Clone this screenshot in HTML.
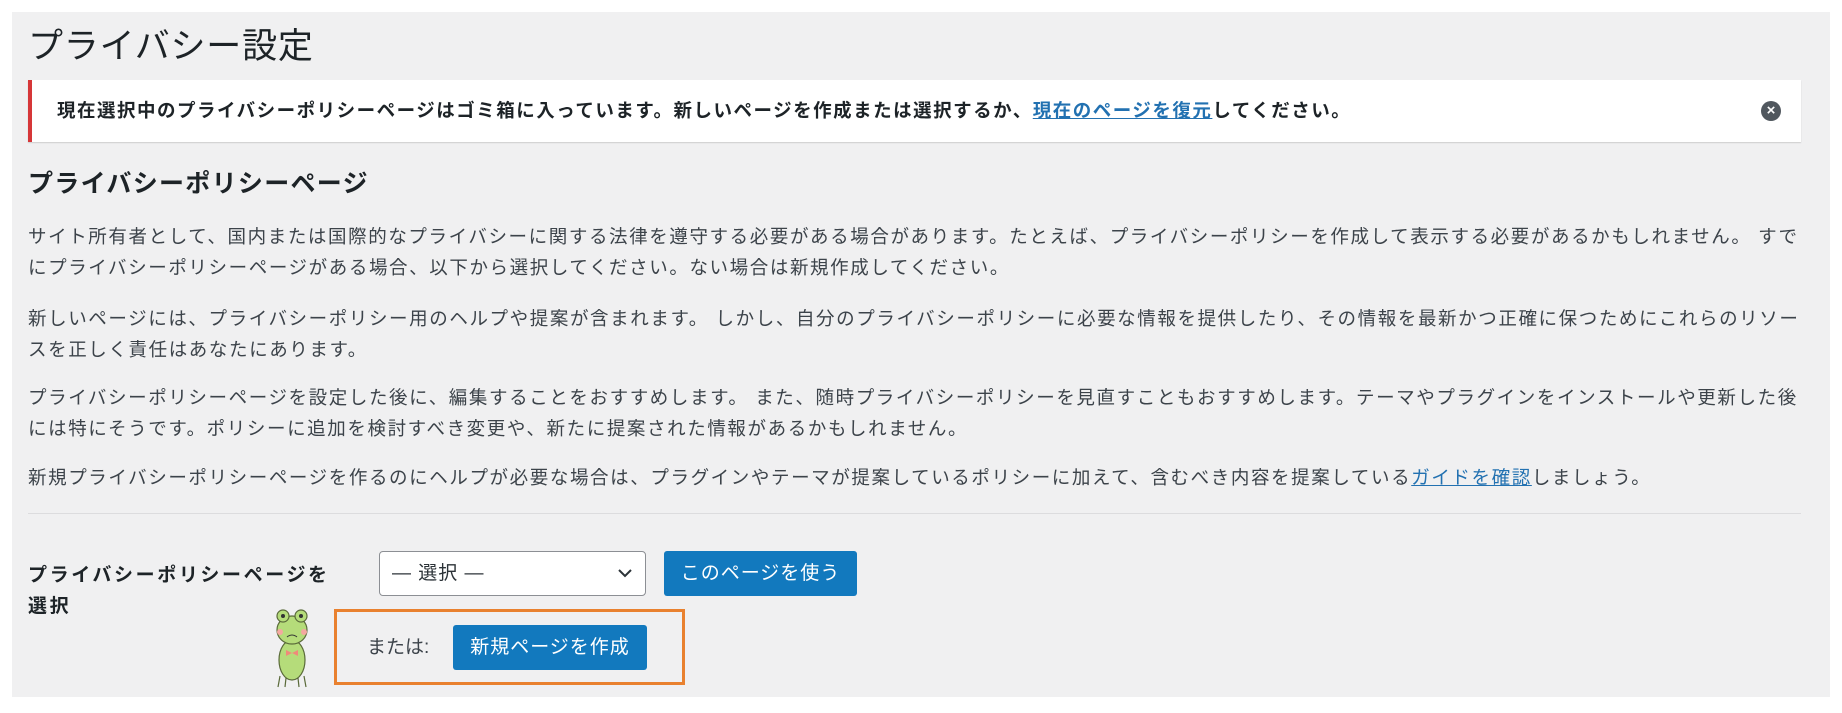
<!DOCTYPE html>
<html><head><meta charset="utf-8"><style>
body{margin:0;width:1842px;height:713px;background:#fff;overflow:hidden;font-family:"Liberation Sans","Noto Sans CJK JP",sans-serif;color:#3c434a}
.panel{position:absolute;left:12px;top:12px;width:1818px;height:685px;background:#f0f0f1}
.abs{position:absolute}
h1{position:absolute;left:28px;top:18px;margin:0;font-size:35px;font-weight:400;color:#1d2327;letter-spacing:0.8px}
.notice{position:absolute;left:28px;top:80px;width:1773px;height:62px;background:#fff;border-left:4px solid #d63638;box-shadow:0 1px 1px rgba(0,0,0,.15);font-size:18.5px;font-weight:bold;color:#1d2327;line-height:62px;box-sizing:border-box;padding-left:25px;letter-spacing:1.5px}
.notice a{color:#2271b1;text-decoration:underline}
.x{position:absolute;right:20px;top:21px;width:20px;height:20px;border-radius:50%;background:#50575e;color:#fff;font-size:15px;line-height:20px;text-align:center;font-weight:bold;letter-spacing:0}
h2{position:absolute;left:28px;top:164px;margin:0;font-size:25px;color:#1d2327;letter-spacing:1.3px}
.txt{position:absolute;left:28px;width:1780px;font-size:18.5px;line-height:31px;color:#3c434a;letter-spacing:1.6px}
.txt a{color:#2271b1;text-decoration:underline}
hr{position:absolute;left:28px;top:513px;width:1773px;margin:0;border:0;border-top:1px solid #dcdcde}
.lbl{position:absolute;left:28px;top:560px;font-size:19px;font-weight:bold;color:#1d2327;line-height:31px;letter-spacing:2.6px}
.sel{position:absolute;left:379px;top:551px;width:267px;height:45px;box-sizing:border-box;border:1px solid #8c8f94;border-radius:4px;background:#fff;font-size:19px;line-height:43px;padding-left:12px;color:#2c3338;letter-spacing:1px}
.btn{position:absolute;background:#1279be;color:#fff;border-radius:3px;font-size:19px;text-align:center;letter-spacing:1px}
.orange{position:absolute;left:334px;top:609px;width:351px;height:76px;box-sizing:border-box;border:3.5px solid #e9812f}
</style></head><body>
<div class="panel"></div>
<h1>プライバシー設定</h1>
<div class="notice">現在選択中のプライバシーポリシーページはゴミ箱に入っています。新しいページを作成または選択するか、<a>現在のページを復元</a>してください。<div class="x">×</div></div>
<h2>プライバシーポリシーページ</h2>
<div class="txt" style="top:221px">サイト所有者として、国内または国際的なプライバシーに関する法律を遵守する必要がある場合があります。たとえば、プライバシーポリシーを作成して表示する必要があるかもしれません。 すで<br>にプライバシーポリシーページがある場合、以下から選択してください。ない場合は新規作成してください。</div>
<div class="txt" style="top:303px">新しいページには、プライバシーポリシー用のヘルプや提案が含まれます。 しかし、自分のプライバシーポリシーに必要な情報を提供したり、その情報を最新かつ正確に保つためにこれらのリソー<br>スを正しく責任はあなたにあります。</div>
<div class="txt" style="top:382px">プライバシーポリシーページを設定した後に、編集することをおすすめします。 また、随時プライバシーポリシーを見直すこともおすすめします。テーマやプラグインをインストールや更新した後<br>には特にそうです。ポリシーに追加を検討すべき変更や、新たに提案された情報があるかもしれません。</div>
<div class="txt" style="top:462px">新規プライバシーポリシーページを作るのにヘルプが必要な場合は、プラグインやテーマが提案しているポリシーに加えて、含むべき内容を提案している<a>ガイドを確認</a>しましょう。</div>
<hr>
<div class="lbl">プライバシーポリシーページを<br>選択</div>
<div class="sel">— 選択 —<svg class="abs" style="right:12px;top:16px" width="16" height="10" viewBox="0 0 16 10"><path d="M2 2l6 6 6-6" fill="none" stroke="#2c3338" stroke-width="2"/></svg></div>
<div class="btn" style="left:664px;top:551px;width:193px;height:45px;line-height:45px">このページを使う</div>
<div class="orange"></div>
<div class="abs" style="left:367px;top:632px;font-size:19px;color:#3c434a">または:</div>
<div class="btn" style="left:453px;top:625px;width:194px;height:45px;line-height:45px">新規ページを作成</div>
<svg class="abs" style="left:264px;top:606px" width="56" height="82" viewBox="0 0 56 82">
<g stroke="#5a6a3a" stroke-width="1.2" fill="#b5dc7a">
<ellipse cx="28" cy="54" rx="13" ry="20"/>
<ellipse cx="28" cy="24" rx="15" ry="14"/>
<circle cx="19" cy="10" r="6"/><circle cx="37" cy="10" r="6"/>
<path d="M16 70 l-2 11 M22 72 l-1 9 M34 72 l1 9 M40 70 l2 11"/>
</g>
<circle cx="19" cy="10" r="2" fill="#333"/><circle cx="37" cy="10" r="2" fill="#333"/>
<circle cx="16" cy="26" r="3" fill="#f4a8a0"/><circle cx="40" cy="26" r="3" fill="#f4a8a0"/>
<path d="M23 31 q5 -4 10 0" stroke="#333" fill="none"/>
<path d="M22 44 l6 3 l-6 3z M34 44 l-6 3 l6 3z" fill="#f08a7a"/>
</svg>
</body></html>
